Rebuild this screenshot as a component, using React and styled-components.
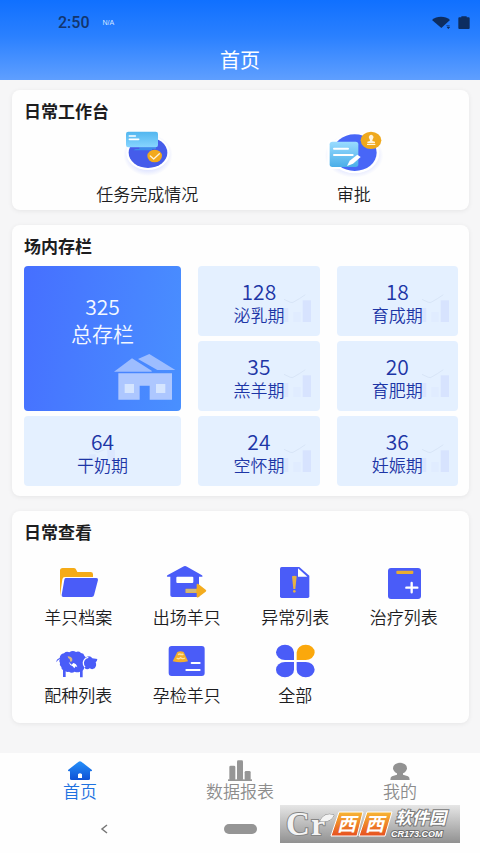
import React from 'react';
import styled, { createGlobalStyle } from 'styled-components';

const GlobalStyle = createGlobalStyle`
  *, *::before, *::after { box-sizing: border-box; }
  body {
    margin: 0;
    background: #f6f6f7;
    color: #1d1d1f;
    font-family: "Noto Sans CJK SC", "Noto Sans", sans-serif;
    font-weight: 350;
  }
  button {
    margin: 0;
    padding: 0;
    border: 0;
    background: none;
    color: inherit;
    font: inherit;
    cursor: pointer;
  }
  svg { display: block; flex: none; }
`;

const Page = styled.div`
  display: flex;
  flex-direction: column;
  min-height: 100vh;
`;

const Header = styled.header`
  display: flex;
  flex-direction: column;
  height: 80px;
  background: linear-gradient(#1070ff, #2a80ff 45%, #5f9fff);
`;

const StatusBar = styled.div`
  display: flex;
  align-items: center;
  height: 46px;
  padding: 0 10px 0 58px;
  color: #12356e;
`;

const Clock = styled.span`
  font: 500 16px/20px Roboto, sans-serif;
`;

const Carrier = styled.span`
  margin-left: 13px;
  color: #d5e6ff;
  font: 7px/10px "Liberation Sans", sans-serif;
`;

const StatusIcons = styled.div`
  display: flex;
  align-items: center;
  gap: 8px;
  margin-left: auto;
`;

const PageTitle = styled.h1`
  margin: 0;
  color: #fff;
  font-size: 20px;
  font-weight: 400;
  line-height: 28px;
  text-align: center;
`;

const Main = styled.main`
  display: flex;
  flex: 1;
  flex-direction: column;
  gap: 15px;
  padding: 10px 11px 30px 12px;
`;

const Card = styled.section`
  padding: 10px 11px ${(p) => p.$bottom}px 12px;
  border-radius: 8px;
  background: #fefefe;
  box-shadow: 0 1px 5px rgba(0, 0, 0, 0.07);
`;

const CardTitle = styled.h2`
  margin: 0;
  font-size: 17px;
  font-weight: 700;
  line-height: 22px;
`;

const WorkGrid = styled.div`
  display: grid;
  grid-template-columns: 1fr 1fr;
  padding: 5px 1px 0 20px;
`;

const MenuGrid = styled.div`
  display: grid;
  grid-template-columns: repeat(4, 1fr);
  row-gap: 14px;
  padding-top: 20px;
`;

const Shortcut = styled.button`
  display: flex;
  flex-direction: column;
  align-items: center;
  gap: ${(p) => p.$gap}px;
`;

const ShortcutLabel = styled.span`
  font-size: 17px;
  line-height: 20px;
  white-space: nowrap;
`;

const StockGrid = styled.div`
  display: grid;
  grid-template-columns: 158fr 122fr 122fr;
  grid-auto-rows: 70px;
  gap: 5px 17px;
  margin-top: 9px;
`;

const StockTile = styled.button`
  position: relative;
  display: flex;
  flex-direction: column;
  align-items: center;
  padding-top: 13px;
  border-radius: 4px;
  background: #e4f0ff;
  color: #1d36a6;
`;

const TotalTile = styled(StockTile)`
  grid-row: span 2;
  padding-top: 27px;
  background: linear-gradient(100deg, #466fff, #4990ff);
  color: #f4f8ff;
`;

const TileValue = styled.span`
  position: relative;
  z-index: 1;
  font-size: 21px;
  line-height: ${(p) => (p.$large ? 27 : 24)}px;
`;

const TileLabel = styled.span`
  position: relative;
  z-index: 1;
  font-size: ${(p) => (p.$large ? 21 : 17)}px;
  line-height: ${(p) => (p.$large ? 27 : 24)}px;
`;

const TileArt = styled.span`
  position: absolute;
  right: ${(p) => p.$right}px;
  bottom: ${(p) => p.$bottom}px;
`;

const Footer = styled.footer`
  position: relative;
  background: #fefefe;
`;

const TabBar = styled.nav`
  display: grid;
  grid-template-columns: repeat(3, 1fr);
  height: 52px;
  padding-top: 7px;
`;

const Tab = styled.button`
  display: flex;
  flex-direction: column;
  align-items: center;
  color: ${(p) => (p.$active ? '#1f72e0' : '#8c8c8c')};
  font-size: 17px;
  line-height: 20px;
`;

const SystemBar = styled.div`
  display: grid;
  grid-template-columns: 1fr 64px 1fr;
  align-items: center;
  justify-items: center;
  height: 48px;
`;

const SystemButton = styled.button`
  display: grid;
  place-items: center;
  width: 48px;
  height: 40px;
`;

const HomePill = styled.span`
  width: 33px;
  height: 10px;
  border-radius: 5px;
  background: #959595;
`;

const Watermark = styled.div`
  position: absolute;
  right: 20px;
  bottom: 10px;
`;

const BLUE = '#4a5cf8';

function WifiIcon() {
  return (
    <svg width="18" height="14" viewBox="0 0 54 42" fill="#0d2d60">
      <path d="M0 12C14-1 40-1 54 12L28 36Z" />
      <path d="M43 29h10M45 33l4 5 4-5z" stroke="#0d2d60" strokeWidth="2" />
    </svg>
  );
}

function BatteryIcon() {
  return (
    <svg width="12" height="14" viewBox="0 0 36 42" fill="#0d2d60">
      <path d="M10 1h16v3h6q3 0 3 3v29q0 3-3 3H4q-3 0-3-3V7q0-3 3-3h6z" />
    </svg>
  );
}

function TaskIcon() {
  return (
    <svg width="54" height="50" viewBox="360 126 162 150">
      <defs>
        <linearGradient id="screen" x1="0" y1="0" x2="0" y2="1">
          <stop offset="0" stopColor="#52b6ef" />
          <stop offset="1" stopColor="#87d5ff" />
        </linearGradient>
        <radialGradient id="halo">
          <stop offset="0.7" stopColor="#dfe4ff" />
          <stop offset="1" stopColor="#dfe4ff" stopOpacity="0" />
        </radialGradient>
      </defs>
      <ellipse cx="444" cy="210" rx="74" ry="63" fill="url(#halo)" />
      <ellipse cx="444" cy="204" rx="65" ry="51" fill="#fff" />
      <ellipse cx="444" cy="203" rx="58" ry="46" fill="#455cea" />
      <path d="M418 187h50v5h-12v4h-56l7-4h11z" fill="#3d8cea" />
      <rect x="378" y="140" width="96" height="47" rx="7" fill="url(#screen)" />
      <path d="M388 153h18M388 163h28" stroke="#fff" strokeWidth="5" strokeLinecap="round" />
      <ellipse cx="464" cy="213" rx="22" ry="19" fill="#f2a91c" />
      <path d="m451 213 10 9 17-16" fill="none" stroke="#fff2d8" strokeWidth="4" strokeLinecap="round" strokeLinejoin="round" />
    </svg>
  );
}

function ApproveIcon() {
  return (
    <svg width="60" height="50" viewBox="249 126 180 150">
      <defs>
        <linearGradient id="sheet" x1="0" y1="0" x2="0" y2="1">
          <stop offset="0" stopColor="#9bdcff" />
          <stop offset="1" stopColor="#4aaee8" />
        </linearGradient>
        <radialGradient id="halo2">
          <stop offset="0.7" stopColor="#dfe4ff" />
          <stop offset="1" stopColor="#dfe4ff" stopOpacity="0" />
        </radialGradient>
      </defs>
      <ellipse cx="339" cy="212" rx="88" ry="66" fill="url(#halo2)" />
      <ellipse cx="341" cy="204" rx="74" ry="61" fill="#fff" />
      <rect x="259" y="165" width="96" height="87" rx="10" fill="#fff" />
      <ellipse cx="341" cy="203" rx="66" ry="55" fill="#4866f7" />
      <rect x="266" y="170" width="86" height="76" rx="8" fill="url(#sheet)" />
      <path d="M279 191h42M279 210h56" stroke="#fff" strokeWidth="6" strokeLinecap="round" />
      <path d="m318 243 8-16 23-18 10 7-23 20z" fill="#fff" />
      <ellipse cx="390" cy="166" rx="31" ry="26" fill="#efa91d" />
      <path d="M387 168q0-5-2-7a7 7 0 1 1 11 0q-2 2-2 7l8 2v5h-23v-5zM378 177h25v3h-25z" fill="#fff4de" />
    </svg>
  );
}

function HouseArt() {
  return (
    <svg width="62" height="46" viewBox="342 402 186 138">
      <path d="M414 417 448 402l78 48h-54z" fill="#9dbdff" />
      <path d="m342 455 54-40 59 37v3z" fill="#9dbdff" />
      <path d="M355 460h161v79h-67v-42h-30v42h-64z" fill="#adc7ff" />
      <path d="M374 492h28v27h-28zM468 492h28v27h-28z" fill="#d5e5ff" />
    </svg>
  );
}

function TrendArt() {
  return (
    <svg width="31" height="28" viewBox="270 118 93 84">
      <path d="M270 160h25v42h-25z" fill="#dae6fe" />
      <path d="M310 172h22v30h-22z" fill="#e0ecff" />
      <path d="M338 137h25v65h-25z" fill="#d7e3fe" />
      <path d="m282 134 19 9q6 2 10-1l17-10 18-12" fill="none" stroke="#d8e5f7" strokeWidth="3" />
    </svg>
  );
}

function FaintTrendArt() {
  return (
    <svg width="26" height="14" viewBox="0 0 78 42">
      <path d="m10 8 16 8 22-9" fill="none" stroke="#dbe7f9" strokeWidth="3" />
      <path d="M0 22h20v20H0zM55 8h23v34H55z" fill="#dce8ff" />
    </svg>
  );
}

function FolderIcon() {
  return (
    <svg width="44" height="40" viewBox="108 39 132 120">
      <path d="M120 139V62q0-8 8-8h34q5 0 7 6l3 6h40q7 0 7 7v8h-84q-7 0-8 7z" fill="#f5ab17" />
      <path d="M137 84h92q6 0 5 6l-12 46q-1 5-7 5h-85q-6 0-5-6l8-46q1-5 4-5z" fill={BLUE} />
    </svg>
  );
}

function LeaveIcon() {
  return (
    <svg width="44" height="40" viewBox="433 39 132 120">
      <path d="M440 80q-3 0 0-4l47-26q6-4 12 0l45 26q4 4 0 4h-9v24l22 17-22 20h-80q-6 0-6-5V80z" fill={BLUE} />
      <path d="M536 98h24v50h-24z" fill="#fefefe" />
      <rect x="467" y="80" width="51" height="19" rx="3" fill="#fff" />
      <path d="M495 116h33v-13q2-3 6 0l21 16q4 3 0 6l-21 16q-4 3-6 0v-12h-33z" fill="#f3ac1f" />
      <path d="M495 117h32v11h-32z" fill="#d2b978" />
    </svg>
  );
}

function AlertIcon() {
  return (
    <svg width="44" height="40" viewBox="98 39 132 120">
      <path d="M124 51h53l30 26v62q0 5-5 5h-78q-5 0-5-5V56q0-5 5-5z" fill={BLUE} />
      <path d="M173 55v25h28z" fill="#fff" />
      <path d="M155 79q7-4 14 0l-4 38h-6z" fill="#e6b144" />
      <circle cx="162" cy="124" r="4" fill="#e6b144" />
    </svg>
  );
}

function TreatIcon() {
  return (
    <svg width="44" height="40" viewBox="423 39 132 120">
      <rect x="441" y="54" width="99" height="93" rx="9" fill={BLUE} />
      <rect x="466" y="62" width="51" height="10" rx="3" fill="#e9ac32" />
      <path d="M512 99v28M496 113h33" stroke="#fff" strokeWidth="7" strokeLinecap="round" />
    </svg>
  );
}

function SheepIcon() {
  return (
    <svg width="44" height="40" viewBox="108 33 132 120">
      <path
        d="M120 87q-7 2-11 10 0-10 10-13 1-12 13-14 7-7 16-3 10-7 20-1 8-4 15 3 9 1 10 8 9 7 2 17-2 11-2 18-1 8-5 10v20h-8v-17q-8 3-16 0-9 6-17 0-7 2-10-1v17h-8v-21q-5-2-5-9-7-5-4-12-5-5 0-12z"
        fill={BLUE}
      />
      <path d="M193 113q-7-8-4-18 4-14 18-16 6 0 10 6l15 2q-1 9-5 10 4 10-3 18-8 5-15 0-8 6-16-2z" fill={BLUE} />
      <path d="M205 82q-13 3-15 15-1 9 5 15" fill="none" stroke="#fff" strokeWidth="4" />
      <path d="M143 79q12 1 14 8 1 10-6 8l-2-8q-6-2-6-8z" fill="#d7b986" />
      <path d="m146 95 9 9 5-5q9 1 12 13l-5-3-4 6-5-6q-9-3-12-14z" fill="#fff" />
    </svg>
  );
}

function PregnancyIcon() {
  return (
    <svg width="44" height="40" viewBox="433 33 132 120">
      <rect x="444" y="48" width="108" height="90" rx="9" fill={BLUE} />
      <path d="M470 66q9-5 19 0l13 28q-23 6-46 0z" fill="#f3ae2c" />
      <path d="M472 74q6-4 9 0 4-3 7 1M468 84q7 5 12-1 5 5 13 1" fill="none" stroke="#ffe2a2" strokeWidth="4" />
      <path d="M513 99h24M497 120h40" stroke="#fff" strokeWidth="6" strokeLinecap="round" />
    </svg>
  );
}

function AllIcon() {
  return (
    <svg width="44" height="40" viewBox="98 33 132 120">
      <path d="M161 90h-27a27 23 0 1 1 27-23z" fill={BLUE} />
      <path d="M169 90h26a27 23 0 1 0-26-23z" fill="#fba80c" />
      <path d="M161 96h-27a27 23 0 1 0 27 23z" fill={BLUE} />
      <path d="M169 96h26a27 23 0 1 1-26 23z" fill={BLUE} />
    </svg>
  );
}

function HomeTabIcon() {
  return (
    <svg width="24" height="21" viewBox="204 30 72 63">
      <defs>
        <linearGradient id="home" x1="0" y1="0" x2="0" y2="1">
          <stop offset="0" stopColor="#2590fa" />
          <stop offset="1" stopColor="#0e51d5" />
        </linearGradient>
      </defs>
      <path d="m236 35q4-2 8 0l31 24q3 4-2 5h-3v22q0 4-5 4h-50q-5 0-5-4V64h-3q-5-1-2-5z" fill="url(#home)" />
      <path d="M234 84V73q6-7 12 0v11z" fill="#fff" />
    </svg>
  );
}

function ReportTabIcon() {
  return (
    <svg width="24" height="21" viewBox="684 30 72 63" fill="#969696">
      <rect x="688" y="47" width="18" height="44" rx="4" />
      <rect x="711" y="31" width="18" height="60" rx="4" />
      <rect x="734" y="63" width="18" height="28" rx="4" />
      <path d="M684 88h72v5h-72z" />
    </svg>
  );
}

function MineTabIcon() {
  return (
    <svg width="24" height="21" viewBox="382 30 72 63" fill="#929292">
      <ellipse cx="418" cy="55" rx="21" ry="17" />
      <path d="M409 66h18v8l15 5q5 2 5 11h-58q0-9 5-11l15-5z" />
    </svg>
  );
}

function WatermarkLogo() {
  return (
    <svg width="180" height="38" viewBox="0 0 180 38" role="img" aria-label="Cr 西西软件园 CR173.COM">
      <defs>
        <linearGradient id="plate" x1="0" y1="0" x2="0" y2="1">
          <stop offset="0" stopColor="#e6e6e6" />
          <stop offset="1" stopColor="#919191" />
        </linearGradient>
        <linearGradient id="orange" x1="0" y1="0" x2="0" y2="1">
          <stop offset="0" stopColor="#f7b634" />
          <stop offset="1" stopColor="#e64f20" />
        </linearGradient>
      </defs>
      <path d="M0 0h180v38H0z" fill="url(#plate)" />
      <g fill="#f4f4f4" stroke="#858585" strokeWidth="2" paintOrder="stroke" fontFamily="Liberation Serif, serif" fontWeight="700">
        <text x="6" y="30" fontSize="33">C</text>
        <text x="31" y="30" fontSize="32">r</text>
        <path d="M40 16q4-9 14-6-3 8-14 6z" strokeWidth="1" />
      </g>
      <path d="M59 7h24l-6 24H51zM87 7h25l-7 24H79z" fill="url(#orange)" stroke="#fff" />
      <g fontFamily="Noto Sans CJK SC, sans-serif" fontWeight="700" fontStyle="italic" fill="#fff">
        <text x="57" y="26" fontSize="19">西</text>
        <text x="85" y="26" fontSize="19">西</text>
        <text x="115" y="19" fontSize="17" stroke="#777" strokeWidth="2" paintOrder="stroke">软件园</text>
      </g>
      <text x="111" y="32" fontSize="9" fontFamily="Liberation Sans, sans-serif" fontWeight="700" fontStyle="italic" fill="#fff" stroke="#707070" strokeWidth="2" paintOrder="stroke">
        CR173.COM
      </text>
    </svg>
  );
}

const stock = [
  ['128', '泌乳期'],
  ['18', '育成期'],
  ['35', '羔羊期'],
  ['20', '育肥期'],
  ['64', '干奶期', true],
  ['24', '空怀期'],
  ['36', '妊娠期'],
];

const menu = [
  ['羊只档案', FolderIcon],
  ['出场羊只', LeaveIcon],
  ['异常列表', AlertIcon],
  ['治疗列表', TreatIcon],
  ['配种列表', SheepIcon],
  ['孕检羊只', PregnancyIcon],
  ['全部', AllIcon],
];

const work = [
  ['任务完成情况', TaskIcon],
  ['审批', ApproveIcon],
];

const tabs = [
  ['首页', HomeTabIcon],
  ['数据报表', ReportTabIcon],
  ['我的', MineTabIcon],
];

function Shortcuts({ items, gap }) {
  return items.map(([label, Icon]) => (
    <Shortcut key={label} type="button" $gap={gap}>
      <Icon />
      <ShortcutLabel>{label}</ShortcutLabel>
    </Shortcut>
  ));
}

export default function App() {
  return (
    <Page>
      <GlobalStyle />
      <Header>
        <StatusBar>
          <Clock>2:50</Clock>
          <Carrier>N/A</Carrier>
          <StatusIcons>
            <WifiIcon />
            <BatteryIcon />
          </StatusIcons>
        </StatusBar>
        <PageTitle>首页</PageTitle>
      </Header>
      <Main>
        <Card $bottom={6}>
          <CardTitle>日常工作台</CardTitle>
          <WorkGrid>
            <Shortcuts items={work} gap={7} />
          </WorkGrid>
        </Card>
        <Card $bottom={10}>
          <CardTitle>场内存栏</CardTitle>
          <StockGrid>
            <TotalTile type="button">
              <TileValue $large>325</TileValue>
              <TileLabel $large>总存栏</TileLabel>
              <TileArt $right={5} $bottom={11}>
                <HouseArt />
              </TileArt>
            </TotalTile>
            {stock.map(([value, label, faint]) => (
              <StockTile key={label} type="button">
                <TileValue>{value}</TileValue>
                <TileLabel>{label}</TileLabel>
                <TileArt $right={faint ? 66 : 9} $bottom={faint ? 25 : 14}>
                  {faint ? <FaintTrendArt /> : <TrendArt />}
                </TileArt>
              </StockTile>
            ))}
          </StockGrid>
        </Card>
        <Card $bottom={18}>
          <CardTitle>日常查看</CardTitle>
          <MenuGrid>
            <Shortcuts items={menu} gap={4} />
          </MenuGrid>
        </Card>
      </Main>
      <Footer>
        <TabBar>
          {tabs.map(([label, Icon], i) => (
            <Tab key={label} type="button" $active={i === 0}>
              <Icon />
              {label}
            </Tab>
          ))}
        </TabBar>
        <SystemBar>
          <SystemButton type="button" aria-label="返回">
            <svg width="8" height="10" viewBox="0 0 8 10" fill="none" stroke="#777" strokeWidth="1.5">
              <path d="M7 1 2 5l5 4" />
            </svg>
          </SystemButton>
          <SystemButton type="button" aria-label="主屏幕">
            <HomePill />
          </SystemButton>
        </SystemBar>
        <Watermark>
          <WatermarkLogo />
        </Watermark>
      </Footer>
    </Page>
  );
}
